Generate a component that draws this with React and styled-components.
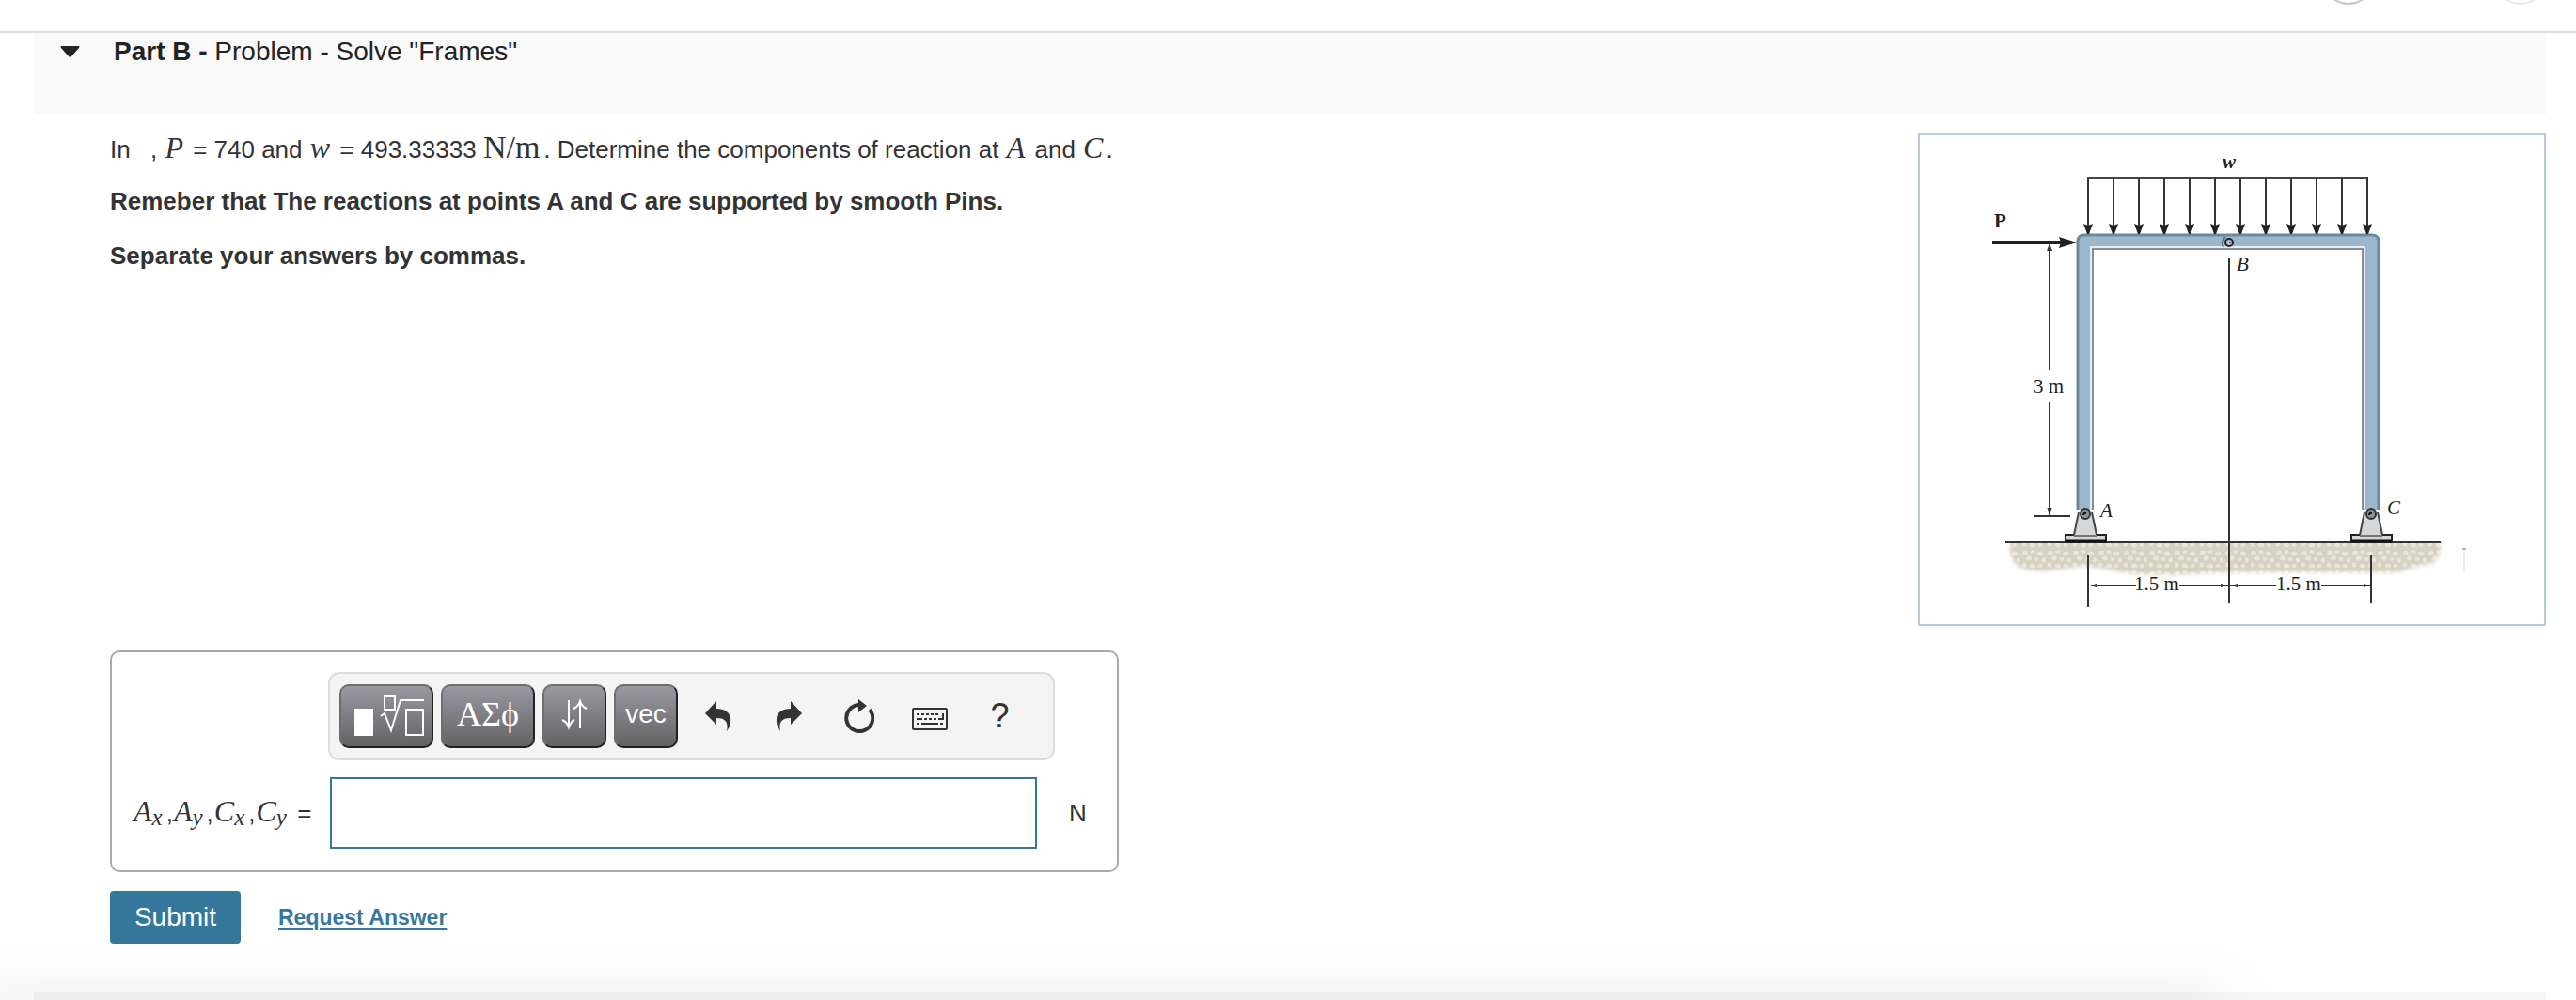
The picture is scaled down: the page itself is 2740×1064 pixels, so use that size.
import React, { useState } from "react";
import styled, { createGlobalStyle } from "styled-components";

const GlobalStyle = createGlobalStyle`
  * {
    box-sizing: border-box;
  }
  body {
    margin: 0;
    background: #fff;
    color: #333;
    font-family: "Liberation Sans", Arial, sans-serif;
    font-size: 26px;
  }
`;

const Page = styled.div`
  display: flex;
  flex-direction: column;
  min-height: 100vh;
  overflow: hidden;
`;

const TopBar = styled.header`
  display: flex;
  justify-content: flex-end;
  align-items: flex-end;
  gap: 127px;
  height: 35px;
  padding: 0 31px 28px 0;
  border-bottom: 2px solid #e0e0e0;
  overflow: hidden;
`;

const RoundButton = styled.button`
  flex: none;
  width: 56px;
  height: 56px;
  padding: 0;
  border: 2px solid ${props => props.$color};
  border-radius: 50%;
  background: transparent;
`;

const PartHeader = styled.div`
  display: flex;
  align-items: flex-start;
  gap: 36px;
  height: 86px;
  margin: 0 32px 0 36px;
  padding: 4px 28px;
  background: #f9f9f9;
  color: #222;
`;

const Toggle = styled.button`
  display: flex;
  align-items: center;
  height: 32px;
  padding: 0;
  border: 0;
  background: transparent;
`;

const PartTitle = styled.h2`
  margin: 0;
  font-size: 28px;
  line-height: 32px;
  font-weight: normal;
`;

const Content = styled.main`
  display: flex;
  flex-direction: column;
  align-items: flex-start;
  flex: 1;
  padding: 21px 32px 0 117px;
`;

const Problem = styled.div`
  display: flex;
  justify-content: space-between;
  align-items: flex-start;
  width: 100%;
  margin-bottom: 26px;
`;

const Statement = styled.div`
  padding-top: 1px;
  line-height: 32px;
`;

const Paragraph = styled.p`
  margin: 0 0 ${props => (props.$lead ? "23px" : "26px")};
  font-weight: ${props => (props.$lead ? "normal" : "bold")};
`;

const Gap = styled.span`
  display: inline-block;
  width: 14px;
`;

const Var = styled.i`
  font-family: "Liberation Serif", "Times New Roman", serif;
  font-size: 32px;
  line-height: 0;
  padding: 0 3px 0 1px;
`;

const Unit = styled.span`
  font-family: "Liberation Serif", "Times New Roman", serif;
  font-size: 34px;
  line-height: 0;
  padding: 0 4px 0 0;
`;

const Figure = styled.figure`
  flex: 0 0 668px;
  margin: 0;
  border: 2px solid #bac9df;

  svg {
    display: block;
    width: 100%;
    height: auto;
  }

  text {
    font-family: "Liberation Serif", "Times New Roman", serif;
    font-size: 21px;
    fill: #231f20;
  }
`;

const AnswerBox = styled.form`
  width: 1073px;
  max-width: 100%;
  padding: 21px 22px 23px;
  border: 2px solid #aaa;
  border-radius: 10px;
`;

const Toolbar = styled.div`
  display: flex;
  align-items: center;
  width: 773px;
  height: 94px;
  margin: 0 0 18px 208px;
  padding: 0 10px;
  border: 2px solid #ddd;
  border-radius: 12px;
  background: #f4f4f4;
`;

const Palettes = styled.div`
  display: flex;
  gap: 8px;
  margin-right: 5px;
`;

const PaletteButton = styled.button`
  display: flex;
  align-items: center;
  justify-content: center;
  width: ${props => (props.$wide ? "100px" : "68px")};
  height: 68px;
  padding: 0 0 4px;
  border: 2px solid;
  border-color: #6e6e6e #222 #222 #6e6e6e;
  border-radius: 10px;
  background: linear-gradient(#9a98a2, #636363);
  color: #fff;
  font-family: ${props =>
    props.$serif
      ? '"Liberation Serif", "DejaVu Serif", serif'
      : '"Liberation Sans", Arial, sans-serif'};
  font-size: ${props => (props.$serif ? "36px" : "28px")};
`;

const IconButton = styled.button`
  display: flex;
  align-items: center;
  justify-content: center;
  width: 75px;
  height: 68px;
  padding: 0;
  border: 0;
  background: transparent;
  color: #333;
  font-family: "Liberation Sans", Arial, sans-serif;
  font-size: 36px;
`;

const AnswerRow = styled.div`
  display: flex;
  align-items: center;
`;

const AnswerLabel = styled.label`
  width: 210px;
  white-space: nowrap;

  sub {
    padding-right: 1px;
    font-size: 25px;
    line-height: 0;
    vertical-align: -4px;
  }
`;

const AnswerInput = styled.input`
  width: 752px;
  height: 76px;
  margin-right: 34px;
  padding: 0 16px;
  border: 2px solid #36789b;
  outline: 0;
  background: #fff;
  font-size: 26px;
`;

const Actions = styled.div`
  display: flex;
  align-items: center;
  gap: 40px;
  margin-top: 20px;
`;

const SubmitButton = styled.button`
  width: 139px;
  height: 56px;
  padding: 0;
  border: 0;
  border-radius: 4px;
  background: #36789b;
  color: #fff;
  font-family: inherit;
  font-size: 28px;
`;

const RequestLink = styled.a`
  color: #36789b;
  font-size: 23px;
  font-weight: bold;
  text-underline-offset: 3px;
  text-decoration-thickness: 2px;
`;

const NextPart = styled.div`
  height: 8px;
  margin: 0 32px 0 36px;
  background: #f8f8f8;
`;

const BottomShade = styled.div`
  position: fixed;
  left: -20px;
  right: 370px;
  top: 100%;
  height: 40px;
  box-shadow: 0 0 70px rgba(0, 0, 0, 0.11);
  pointer-events: none;
`;

const loadArrows = Array.from({ length: 12 }, (_, i) => 179 + i * 27);

const Support = ({ x }) => (
  <g>
    <rect x={x - 21} y="425" width="43" height="7" fill="#d5d6d8" stroke="#222" strokeWidth="2" />
    <path d={`M${x - 21} 432h43`} stroke="#111" strokeWidth="3" />
    <path
      d={`M${x - 12} 426L${x - 7} 402Q${x - 5} 398 ${x} 398Q${x + 5} 398 ${x + 7} 402L${x + 12} 426z`}
      fill="#d5d7d9"
    />
    <path
      d={`M${x - 12} 425L${x - 7} 401M${x + 12} 425L${x + 7} 401`}
      fill="none"
      stroke="#444"
      strokeWidth="2"
    />
    <path d={`M${x - 12} 426h24`} stroke="#777" strokeWidth="2" />
    <circle cx={x} cy="403" r="5" fill="#8c949a" stroke="#333" strokeWidth="2" />
    <path d={`M${x - 2} 404q0 -3 3 -2`} fill="none" stroke="#111" strokeWidth="2" />
  </g>
);

const FrameDiagram = () => (
  <svg viewBox="0 0 664 520" role="img" aria-label="Frame ABC with loads P and w">
    <defs>
      <pattern id="pebbles" width="27" height="22" patternUnits="userSpaceOnUse">
        <rect width="27" height="22" fill="#d6d1c1" />
        <g fill="#ebe6d9" stroke="#cdc7b6" strokeWidth="0.5">
          <ellipse cx="4" cy="4" rx="3.4" ry="2.8" />
          <ellipse cx="12" cy="3" rx="3" ry="2.3" />
          <ellipse cx="20" cy="5" rx="3.6" ry="3" />
          <ellipse cx="8" cy="10" rx="3.4" ry="3" />
          <ellipse cx="16" cy="11" rx="2.8" ry="2.4" />
          <ellipse cx="24" cy="12" rx="2.6" ry="3" />
          <ellipse cx="3" cy="17" rx="2.8" ry="3" />
          <ellipse cx="12" cy="18" rx="3.6" ry="2.8" />
          <ellipse cx="20" cy="18" rx="3" ry="2.4" />
        </g>
      </pattern>
      <filter id="soft" x="-5%" y="-20%" width="110%" height="140%">
        <feGaussianBlur stdDeviation="2" />
      </filter>
      <mask id="soil">
        <path
          d="M96 420H553Q558 448 544 456C522 458 520 465 500 465H335C300 465 280 469 235 467C210 465 195 459 170 459C150 461 140 465 120 463Q97 462 96 440z"
          fill="#fff"
          filter="url(#soft)"
        />
      </mask>
    </defs>

    <rect x="90" y="433" width="470" height="45" fill="url(#pebbles)" mask="url(#soil)" />

    <path
      d="M168 399V113Q168 106 175 106H481Q488 106 488 113V399H472V121H184V399z"
      fill="#9cb6cc"
    />
    <path d="M182 399V119H473V399" fill="none" stroke="#e3edf4" strokeWidth="2" />
    <path d="M184 399V121H471V399" fill="none" stroke="#858d94" strokeWidth="2" />
    <path
      d="M168 399V113Q168 106 175 106H481Q488 106 488 113V399"
      fill="none"
      stroke="#6a899e"
      strokeWidth="3"
    />

    <path d="M323 119Q320 113 325 108" fill="none" stroke="#5b6f7d" strokeWidth="2" />
    <circle cx="329" cy="114" r="4" fill="#b9c6cf" stroke="#222" strokeWidth="2" />
    <circle cx="330" cy="114" r="1" fill="#222" />

    <path d="M178 45H477" stroke="#444" strokeWidth="2" />
    {loadArrows.map(x => (
      <g key={x}>
        <path d={`M${x} 45V98`} stroke="#333" strokeWidth="2" />
        <path d={`M${x - 5} 94L${x} 96L${x + 5} 94L${x + 1} 105H${x - 1}z`} fill="#222" />
      </g>
    ))}

    <path d="M77 114H152" stroke="#222" strokeWidth="4" />
    <path d="M148 108L167 114L148 120L150 114z" fill="#222" />

    <g fill="none" stroke="#333" strokeWidth="2">
      <path d="M138 117V250M138 284V404M122 405H160" />
      <path d="M329 130V498M91 433H554" />
      <path d="M179 446V502M480 446V498" />
      <path d="M182 479H230M276 479H379M427 479H479" />
    </g>
    <path
      d="M138 115l-3 8h6zM138 404l-3 -8h6zM181 479l7 -2v4zM327 479l-7 -2v4zM331 479l7 -2v4zM479 479l-7 -2v4z"
      fill="#333"
    />

    <Support x={176} />
    <Support x={480} />

    <text x="322" y="35" fontStyle="italic" fontWeight="bold">w</text>
    <text x="79" y="98" fontWeight="bold">P</text>
    <text x="337" y="144" fontStyle="italic">B</text>
    <text x="121" y="274">3 m</text>
    <text x="192" y="406" fontStyle="italic">A</text>
    <text x="497" y="403" fontStyle="italic">C</text>
    <text x="228" y="484">1.5 m</text>
    <text x="379" y="484">1.5 m</text>

    <path d="M579 440V466" stroke="#eceae5" strokeWidth="2" />
    <path d="M577 440h4" stroke="#b5b5b0" strokeWidth="2" />
  </svg>
);

const TemplateIcon = () => (
  <svg width="80" height="48" viewBox="0 0 80 48" fill="none" stroke="#fff" strokeWidth="2">
    <path d="M6 18h20v29H6z" fill="#fff" stroke="none" />
    <path d="M38 5h11v14H38z" />
    <path d="M34 26l4 -3l7 18L55 9H80" />
    <path d="M61 19h18v27H61z" />
  </svg>
);

const ArrowsIcon = () => (
  <svg width="28" height="34" viewBox="0 0 28 34" fill="none" stroke="#fff" strokeWidth="2">
    <path d="M8 2V30M1 23Q6 25 8 31Q10 25 14 23" />
    <path d="M20 32V3M13 11Q18 9 20 3Q22 9 27 11" />
  </svg>
);

const UndoIcon = () => (
  <svg width="28" height="32" viewBox="0 0 28 32" fill="#333">
    <path d="M0 13L12 0V8C23 8 28 14 27 22C27 26 25 29 23 32C25 23 22 18 12 18V25z" />
  </svg>
);

const RedoIcon = () => (
  <svg width="28" height="32" viewBox="0 0 28 32" fill="#333">
    <path d="M28 13L16 0V8C5 8 0 14 1 22C1 26 3 29 5 32C3 23 6 18 16 18V25z" />
  </svg>
);

const ResetIcon = () => (
  <svg width="32" height="36" viewBox="0 0 32 36">
    <path d="M27 11A14 14 0 1 1 16 6" fill="none" stroke="#333" strokeWidth="4" />
    <path d="M15 0L24 7L15 14z" fill="#333" />
  </svg>
);

const KeyboardIcon = () => (
  <svg width="38" height="30" viewBox="0 -6 38 30" fill="none" stroke="#333" strokeWidth="2">
    <rect x="1" y="1" width="36" height="22" rx="1" />
    <path d="M5 7H29" strokeDasharray="3 2" />
    <path d="M5 12h6M13 12h3M18 12h3M23 12h3M28 12h5V6" />
    <path d="M5 17h3M10 17h18M30 17h3" />
  </svg>
);

export default function App() {
  const [answer, setAnswer] = useState("");

  return (
    <Page>
      <GlobalStyle />
      <TopBar>
        <RoundButton $color="#c8c8c8" aria-label="Previous" />
        <RoundButton $color="#ebebeb" aria-label="Next" />
      </TopBar>

      <PartHeader>
        <Toggle aria-label="Collapse part">
          <svg width="21" height="12" viewBox="0 0 21 12">
            <path d="M1 0H20Q21 0 20 2L12 11Q10 12 9 11L1 2Q0 0 1 0z" fill="#222" />
          </svg>
        </Toggle>
        <PartTitle>
          <b>Part B -</b> Problem - Solve "Frames"
        </PartTitle>
      </PartHeader>

      <Content>
        <Problem>
          <Statement>
            <Paragraph $lead>
              In <Gap />, <Var>P</Var> = 740 and <Var>w</Var> = 493.33333 <Unit>N/m</Unit>. Determine
              the components of reaction at <Var>A</Var> and <Var>C</Var>.
            </Paragraph>
            <Paragraph>
              Remeber that The reactions at points A and C are supported by smooth Pins.
            </Paragraph>
            <Paragraph>Separate your answers by commas.</Paragraph>
          </Statement>
          <Figure>
            <FrameDiagram />
          </Figure>
        </Problem>

        <AnswerBox id="answer-form" onSubmit={e => e.preventDefault()}>
          <Toolbar>
            <Palettes>
              <PaletteButton type="button" $wide aria-label="Templates">
                <TemplateIcon />
              </PaletteButton>
              <PaletteButton type="button" $wide $serif>ΑΣϕ</PaletteButton>
              <PaletteButton type="button" aria-label="Arrows">
                <ArrowsIcon />
              </PaletteButton>
              <PaletteButton type="button">vec</PaletteButton>
            </Palettes>
            <IconButton type="button" aria-label="Undo"><UndoIcon /></IconButton>
            <IconButton type="button" aria-label="Redo"><RedoIcon /></IconButton>
            <IconButton type="button" aria-label="Reset"><ResetIcon /></IconButton>
            <IconButton type="button" aria-label="Keyboard shortcuts"><KeyboardIcon /></IconButton>
            <IconButton type="button">?</IconButton>
          </Toolbar>
          <AnswerRow>
            <AnswerLabel htmlFor="answer">
              <Var>A<sub>x</sub></Var>,<Var>A<sub>y</sub></Var>,<Var>C<sub>x</sub></Var>,
              <Var>C<sub>y</sub></Var> =
            </AnswerLabel>
            <AnswerInput id="answer" value={answer} onChange={e => setAnswer(e.target.value)} />
            <span>N</span>
          </AnswerRow>
        </AnswerBox>

        <Actions>
          <SubmitButton type="submit" form="answer-form">Submit</SubmitButton>
          <RequestLink href="#answer">Request Answer</RequestLink>
        </Actions>
      </Content>

      <NextPart />
      <BottomShade />
    </Page>
  );
}
